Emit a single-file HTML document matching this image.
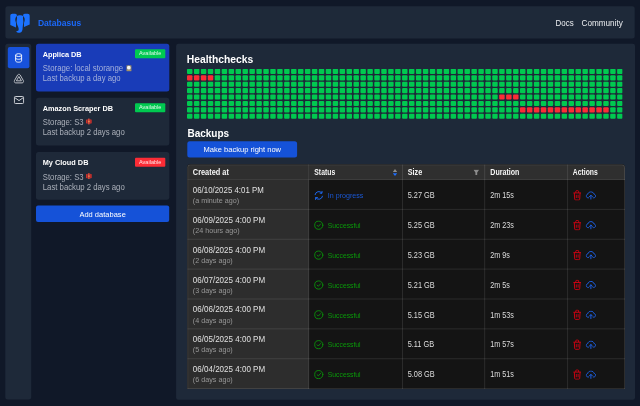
<!DOCTYPE html>
<html lang="en"><head><meta charset="utf-8"><title>Databasus</title>
<style>
html,body{margin:0;padding:0;}
body{width:640px;height:406px;overflow:hidden;background:#101828;font-family:"Liberation Sans", sans-serif;position:relative;will-change:transform;}
#app{position:absolute;left:0;top:0;width:6400px;height:4060px;transform:scale(0.1);transform-origin:0 0;}
#app *{position:absolute;margin:0;padding:0;box-sizing:border-box;}
#app .t{white-space:pre;line-height:120px;height:120px;font-weight:400;transform-origin:0 50%;}
#app button{border:0;font-family:inherit;display:block;}
#app a{text-decoration:none;}
</style></head><body><div id="app">
<header style="left:54px;top:63px;width:6293px;height:322px;background:#1e2939;border-radius:25px;">
 <svg viewBox="0 0 20 20.5" role="img" aria-label="logo" style="left:46px;top:67px;width:200px;height:205px;"><g fill="#1c72ff">
<path d="M2.4 0.8 H5.2 C6.2 0.8 7 1.6 6.9 2.6 C6.8 3.6 5.7 4.4 5.4 5.5 C5.2 6.4 5.2 7.4 5.5 8.2 C5.9 9.2 6 9.8 6 10.6 V14.5 L0.3 12 V3 C0.3 1.7 1.1 0.8 2.4 0.8 Z"/>
<path d="M17.6 0.8 H14.8 C13.8 0.8 13 1.6 13.1 2.6 C13.2 3.6 14.3 4.4 14.6 5.5 C14.8 6.4 14.8 7.4 14.5 8.2 C14.1 9.2 14 9.8 14 10.6 V14 L19.7 11.5 V3 C19.7 1.7 18.9 0.8 17.6 0.8 Z"/>
<path d="M7 3 C7.8 2.1 12.2 2.1 13 3 C13.1 3.9 12.9 4.8 13 5.8 C13.2 7 13.5 8.6 13.3 9.8 C13.1 11.4 12.8 12.6 12.7 14.2 C12.6 17.4 11.9 19.5 9.8 19.7 C8.1 19.8 6.6 19.3 6.1 18.4 C6.8 17.8 7.9 18.1 8.4 17.4 C9 16.5 8.6 15.1 8 13.6 C7.5 12.2 6.9 11.2 6.7 9.8 C6.5 8.6 6.8 7 7 5.8 C7.1 4.8 6.9 3.9 7 3 Z"/></g></svg>
 <h1 class="t" style="left:325px;top:105px;font-size:94px;color:#1b68f8;font-weight:700;transform:scaleX(0.913);">Databasus</h1>
 <nav style="left:5446px;top:77px;width:800px;height:200px;">
  <a class="t" style="left:56px;top:30px;font-size:88px;color:#eceef1;transform:scaleX(0.898);">Docs</a>
  <a class="t" style="left:316px;top:30px;font-size:88px;color:#eceef1;transform:scaleX(0.924);">Community</a>
 </nav>
</header>
<aside style="left:53px;top:438px;width:259px;height:3556px;background:#1e2939;border-radius:25px;">
 <button aria-label="Databases" style="left:25px;top:32px;width:216px;height:213px;background:#1752dc;border-radius:20px;">
  <svg viewBox="0 0 10 11" fill="none" stroke="#fff" stroke-width="0.9" style="left:58px;top:54px;width:100px;height:110px;"><ellipse cx="5" cy="2.7" rx="3" ry="1.4"/>
<path d="M2 2.7 V8.4 C2 9.2 3.3 9.8 5 9.8 C6.7 9.8 8 9.2 8 8.4 V2.7"/>
<path d="M2 5.5 C2 6.3 3.3 6.9 5 6.9 C6.7 6.9 8 6.3 8 5.5"/></svg>
 </button>
 <button aria-label="Storages" style="left:25px;top:245px;width:216px;height:213px;background:none;">
  <svg viewBox="0 0 11 10.4" fill="none" stroke="#d4d7dc" stroke-width="0.85" stroke-linejoin="round" style="left:56px;top:53px;width:110px;height:104px;"><path d="M4.3 1.3 C4.8 0.4 6.2 0.4 6.7 1.3 L10 7.1 C10.5 8 9.9 9.3 8.8 9.3 H2.2 C1.1 9.3 0.5 8 1 7.1 Z"/>
<path d="M5.5 2.9 L8 7.2 H3 Z"/></svg>
 </button>
 <button aria-label="Notifiers" style="left:25px;top:458px;width:216px;height:213px;background:none;">
  <svg viewBox="0 0 11 9" fill="none" stroke="#d4d7dc" stroke-width="0.95" stroke-linejoin="round" style="left:57px;top:60px;width:110px;height:90px;"><rect x="0.9" y="0.9" width="9.2" height="7" rx="1"/>
<path d="M1.2 2 L5.5 5 L9.8 2"/></svg>
 </button>
</aside>
<section style="left:360px;top:438px;width:1333px;height:1782px;">
 <article style="left:0px;top:0px;width:1333px;height:478px;background:#193cb8;border-radius:25px;">
  <h2 class="t" style="left:67px;top:46px;font-size:75px;color:#fff;font-weight:700;transform:scaleX(0.972);">Applica DB</h2>
  <span style="left:990px;top:54px;width:303px;height:90px;background:#00c950;border-radius:10px;">
   <span class="t" style="left:40px;top:-22px;font-size:56px;color:rgba(255,255,255,.88);transform:scaleX(0.990);">Available</span>
  </span>
  <p class="t" style="left:68px;top:183px;font-size:84px;color:#a5b1dc;transform:scaleX(0.930);">Storage: local storange</p>
  <svg viewBox="0 0 5.6 6.4" style="left:902px;top:213px;width:56px;height:64px;"><rect x="0.1" y="0.1" width="5.4" height="6.2" rx="0.6" fill="#8f8468"/>
<circle cx="2.6" cy="2.6" r="1.9" fill="#f4f4f4"/>
<rect x="0.6" y="5" width="4.4" height="0.9" fill="#a8956a"/></svg>
  <p class="t" style="left:68px;top:283px;font-size:84px;color:#a5b1dc;transform:scaleX(0.920);">Last backup a day ago</p>
 </article>
 <article style="left:0px;top:540px;width:1333px;height:478px;background:#1e2939;border-radius:25px;">
  <h2 class="t" style="left:67px;top:46px;font-size:75px;color:#fff;font-weight:700;transform:scaleX(0.974);">Amazon Scraper DB</h2>
  <span style="left:990px;top:54px;width:303px;height:90px;background:#00c950;border-radius:10px;">
   <span class="t" style="left:40px;top:-22px;font-size:56px;color:rgba(255,255,255,.88);transform:scaleX(0.990);">Available</span>
  </span>
  <p class="t" style="left:68px;top:183px;font-size:84px;color:#abb0ba;transform:scaleX(0.920);">Storage: S3</p>
  <svg viewBox="0 0 6 6.6" style="left:499px;top:204px;width:60px;height:66px;"><path d="M0.1 1.5 L1.8 1 V5.6 L0.1 5.1 Z M5.9 1.5 L4.2 1 V5.6 L5.9 5.1 Z" fill="#c9302c"/>
<path d="M2.2 0.6 L3 0.1 L3.8 0.6 V6 L3 6.5 L2.2 6 Z" fill="#e8473a"/>
<path d="M2.2 2.6 H3.8 V4 H2.2 Z" fill="#f08a4b"/></svg>
  <p class="t" style="left:68px;top:283px;font-size:84px;color:#abb0ba;transform:scaleX(0.923);">Last backup 2 days ago</p>
 </article>
 <article style="left:0px;top:1081px;width:1333px;height:478px;background:#1e2939;border-radius:25px;">
  <h2 class="t" style="left:67px;top:45px;font-size:75px;color:#fff;font-weight:700;transform:scaleX(0.981);">My Cloud DB</h2>
  <span style="left:990px;top:58px;width:303px;height:90px;background:#fb2c36;border-radius:10px;">
   <span class="t" style="left:40px;top:-17px;font-size:56px;color:rgba(255,255,255,.88);transform:scaleX(0.990);">Available</span>
  </span>
  <p class="t" style="left:68px;top:192px;font-size:84px;color:#abb0ba;transform:scaleX(0.920);">Storage: S3</p>
  <svg viewBox="0 0 6 6.6" style="left:499px;top:209px;width:60px;height:66px;"><path d="M0.1 1.5 L1.8 1 V5.6 L0.1 5.1 Z M5.9 1.5 L4.2 1 V5.6 L5.9 5.1 Z" fill="#c9302c"/>
<path d="M2.2 0.6 L3 0.1 L3.8 0.6 V6 L3 6.5 L2.2 6 Z" fill="#e8473a"/>
<path d="M2.2 2.6 H3.8 V4 H2.2 Z" fill="#f08a4b"/></svg>
  <p class="t" style="left:68px;top:292px;font-size:84px;color:#abb0ba;transform:scaleX(0.923);">Last backup 2 days ago</p>
 </article>
 <button style="left:0px;top:1618px;width:1332px;height:164px;background:#1552d8;border-radius:20px;">
  <span class="t" style="left:434px;top:27px;font-size:79px;color:#fff;transform:scaleX(0.952);">Add database</span>
 </button>
</section>
<main style="left:1761px;top:438px;width:4589px;height:3560px;background:#1e2939;border-radius:23px;">
 <h2 class="t" style="left:106px;top:95px;font-size:107px;color:#fff;font-weight:700;transform:scaleX(0.965);">Healthchecks</h2>
 <svg viewBox="0 0 435.6 50.0" role="img" aria-label="healthchecks" style="left:109px;top:251px;width:4356px;height:500px;"><g fill="#00c950"><rect x="0.00" y="0.00" width="5.45" height="5.1" rx="1"/><rect x="6.94" y="0.00" width="5.45" height="5.1" rx="1"/><rect x="13.88" y="0.00" width="5.45" height="5.1" rx="1"/><rect x="20.81" y="0.00" width="5.45" height="5.1" rx="1"/><rect x="27.75" y="0.00" width="5.45" height="5.1" rx="1"/><rect x="34.69" y="0.00" width="5.45" height="5.1" rx="1"/><rect x="41.63" y="0.00" width="5.45" height="5.1" rx="1"/><rect x="48.56" y="0.00" width="5.45" height="5.1" rx="1"/><rect x="55.50" y="0.00" width="5.45" height="5.1" rx="1"/><rect x="62.44" y="0.00" width="5.45" height="5.1" rx="1"/><rect x="69.38" y="0.00" width="5.45" height="5.1" rx="1"/><rect x="76.31" y="0.00" width="5.45" height="5.1" rx="1"/><rect x="83.25" y="0.00" width="5.45" height="5.1" rx="1"/><rect x="90.19" y="0.00" width="5.45" height="5.1" rx="1"/><rect x="97.13" y="0.00" width="5.45" height="5.1" rx="1"/><rect x="104.06" y="0.00" width="5.45" height="5.1" rx="1"/><rect x="111.00" y="0.00" width="5.45" height="5.1" rx="1"/><rect x="117.94" y="0.00" width="5.45" height="5.1" rx="1"/><rect x="124.88" y="0.00" width="5.45" height="5.1" rx="1"/><rect x="131.81" y="0.00" width="5.45" height="5.1" rx="1"/><rect x="138.75" y="0.00" width="5.45" height="5.1" rx="1"/><rect x="145.69" y="0.00" width="5.45" height="5.1" rx="1"/><rect x="152.63" y="0.00" width="5.45" height="5.1" rx="1"/><rect x="159.56" y="0.00" width="5.45" height="5.1" rx="1"/><rect x="166.50" y="0.00" width="5.45" height="5.1" rx="1"/><rect x="173.44" y="0.00" width="5.45" height="5.1" rx="1"/><rect x="180.38" y="0.00" width="5.45" height="5.1" rx="1"/><rect x="187.32" y="0.00" width="5.45" height="5.1" rx="1"/><rect x="194.25" y="0.00" width="5.45" height="5.1" rx="1"/><rect x="201.19" y="0.00" width="5.45" height="5.1" rx="1"/><rect x="208.13" y="0.00" width="5.45" height="5.1" rx="1"/><rect x="215.07" y="0.00" width="5.45" height="5.1" rx="1"/><rect x="222.00" y="0.00" width="5.45" height="5.1" rx="1"/><rect x="228.94" y="0.00" width="5.45" height="5.1" rx="1"/><rect x="235.88" y="0.00" width="5.45" height="5.1" rx="1"/><rect x="242.82" y="0.00" width="5.45" height="5.1" rx="1"/><rect x="249.75" y="0.00" width="5.45" height="5.1" rx="1"/><rect x="256.69" y="0.00" width="5.45" height="5.1" rx="1"/><rect x="263.63" y="0.00" width="5.45" height="5.1" rx="1"/><rect x="270.57" y="0.00" width="5.45" height="5.1" rx="1"/><rect x="277.50" y="0.00" width="5.45" height="5.1" rx="1"/><rect x="284.44" y="0.00" width="5.45" height="5.1" rx="1"/><rect x="291.38" y="0.00" width="5.45" height="5.1" rx="1"/><rect x="298.32" y="0.00" width="5.45" height="5.1" rx="1"/><rect x="305.25" y="0.00" width="5.45" height="5.1" rx="1"/><rect x="312.19" y="0.00" width="5.45" height="5.1" rx="1"/><rect x="319.13" y="0.00" width="5.45" height="5.1" rx="1"/><rect x="326.07" y="0.00" width="5.45" height="5.1" rx="1"/><rect x="333.00" y="0.00" width="5.45" height="5.1" rx="1"/><rect x="339.94" y="0.00" width="5.45" height="5.1" rx="1"/><rect x="346.88" y="0.00" width="5.45" height="5.1" rx="1"/><rect x="353.82" y="0.00" width="5.45" height="5.1" rx="1"/><rect x="360.76" y="0.00" width="5.45" height="5.1" rx="1"/><rect x="367.69" y="0.00" width="5.45" height="5.1" rx="1"/><rect x="374.63" y="0.00" width="5.45" height="5.1" rx="1"/><rect x="381.57" y="0.00" width="5.45" height="5.1" rx="1"/><rect x="388.51" y="0.00" width="5.45" height="5.1" rx="1"/><rect x="395.44" y="0.00" width="5.45" height="5.1" rx="1"/><rect x="402.38" y="0.00" width="5.45" height="5.1" rx="1"/><rect x="409.32" y="0.00" width="5.45" height="5.1" rx="1"/><rect x="416.26" y="0.00" width="5.45" height="5.1" rx="1"/><rect x="423.19" y="0.00" width="5.45" height="5.1" rx="1"/><rect x="430.13" y="0.00" width="5.45" height="5.1" rx="1"/><rect x="27.75" y="6.40" width="5.45" height="5.1" rx="1"/><rect x="34.69" y="6.40" width="5.45" height="5.1" rx="1"/><rect x="41.63" y="6.40" width="5.45" height="5.1" rx="1"/><rect x="48.56" y="6.40" width="5.45" height="5.1" rx="1"/><rect x="55.50" y="6.40" width="5.45" height="5.1" rx="1"/><rect x="62.44" y="6.40" width="5.45" height="5.1" rx="1"/><rect x="69.38" y="6.40" width="5.45" height="5.1" rx="1"/><rect x="76.31" y="6.40" width="5.45" height="5.1" rx="1"/><rect x="83.25" y="6.40" width="5.45" height="5.1" rx="1"/><rect x="90.19" y="6.40" width="5.45" height="5.1" rx="1"/><rect x="97.13" y="6.40" width="5.45" height="5.1" rx="1"/><rect x="104.06" y="6.40" width="5.45" height="5.1" rx="1"/><rect x="111.00" y="6.40" width="5.45" height="5.1" rx="1"/><rect x="117.94" y="6.40" width="5.45" height="5.1" rx="1"/><rect x="124.88" y="6.40" width="5.45" height="5.1" rx="1"/><rect x="131.81" y="6.40" width="5.45" height="5.1" rx="1"/><rect x="138.75" y="6.40" width="5.45" height="5.1" rx="1"/><rect x="145.69" y="6.40" width="5.45" height="5.1" rx="1"/><rect x="152.63" y="6.40" width="5.45" height="5.1" rx="1"/><rect x="159.56" y="6.40" width="5.45" height="5.1" rx="1"/><rect x="166.50" y="6.40" width="5.45" height="5.1" rx="1"/><rect x="173.44" y="6.40" width="5.45" height="5.1" rx="1"/><rect x="180.38" y="6.40" width="5.45" height="5.1" rx="1"/><rect x="187.32" y="6.40" width="5.45" height="5.1" rx="1"/><rect x="194.25" y="6.40" width="5.45" height="5.1" rx="1"/><rect x="201.19" y="6.40" width="5.45" height="5.1" rx="1"/><rect x="208.13" y="6.40" width="5.45" height="5.1" rx="1"/><rect x="215.07" y="6.40" width="5.45" height="5.1" rx="1"/><rect x="222.00" y="6.40" width="5.45" height="5.1" rx="1"/><rect x="228.94" y="6.40" width="5.45" height="5.1" rx="1"/><rect x="235.88" y="6.40" width="5.45" height="5.1" rx="1"/><rect x="242.82" y="6.40" width="5.45" height="5.1" rx="1"/><rect x="249.75" y="6.40" width="5.45" height="5.1" rx="1"/><rect x="256.69" y="6.40" width="5.45" height="5.1" rx="1"/><rect x="263.63" y="6.40" width="5.45" height="5.1" rx="1"/><rect x="270.57" y="6.40" width="5.45" height="5.1" rx="1"/><rect x="277.50" y="6.40" width="5.45" height="5.1" rx="1"/><rect x="284.44" y="6.40" width="5.45" height="5.1" rx="1"/><rect x="291.38" y="6.40" width="5.45" height="5.1" rx="1"/><rect x="298.32" y="6.40" width="5.45" height="5.1" rx="1"/><rect x="305.25" y="6.40" width="5.45" height="5.1" rx="1"/><rect x="312.19" y="6.40" width="5.45" height="5.1" rx="1"/><rect x="319.13" y="6.40" width="5.45" height="5.1" rx="1"/><rect x="326.07" y="6.40" width="5.45" height="5.1" rx="1"/><rect x="333.00" y="6.40" width="5.45" height="5.1" rx="1"/><rect x="339.94" y="6.40" width="5.45" height="5.1" rx="1"/><rect x="346.88" y="6.40" width="5.45" height="5.1" rx="1"/><rect x="353.82" y="6.40" width="5.45" height="5.1" rx="1"/><rect x="360.76" y="6.40" width="5.45" height="5.1" rx="1"/><rect x="367.69" y="6.40" width="5.45" height="5.1" rx="1"/><rect x="374.63" y="6.40" width="5.45" height="5.1" rx="1"/><rect x="381.57" y="6.40" width="5.45" height="5.1" rx="1"/><rect x="388.51" y="6.40" width="5.45" height="5.1" rx="1"/><rect x="395.44" y="6.40" width="5.45" height="5.1" rx="1"/><rect x="402.38" y="6.40" width="5.45" height="5.1" rx="1"/><rect x="409.32" y="6.40" width="5.45" height="5.1" rx="1"/><rect x="416.26" y="6.40" width="5.45" height="5.1" rx="1"/><rect x="423.19" y="6.40" width="5.45" height="5.1" rx="1"/><rect x="430.13" y="6.40" width="5.45" height="5.1" rx="1"/><rect x="0.00" y="12.80" width="5.45" height="5.1" rx="1"/><rect x="6.94" y="12.80" width="5.45" height="5.1" rx="1"/><rect x="13.88" y="12.80" width="5.45" height="5.1" rx="1"/><rect x="20.81" y="12.80" width="5.45" height="5.1" rx="1"/><rect x="27.75" y="12.80" width="5.45" height="5.1" rx="1"/><rect x="34.69" y="12.80" width="5.45" height="5.1" rx="1"/><rect x="41.63" y="12.80" width="5.45" height="5.1" rx="1"/><rect x="48.56" y="12.80" width="5.45" height="5.1" rx="1"/><rect x="55.50" y="12.80" width="5.45" height="5.1" rx="1"/><rect x="62.44" y="12.80" width="5.45" height="5.1" rx="1"/><rect x="69.38" y="12.80" width="5.45" height="5.1" rx="1"/><rect x="76.31" y="12.80" width="5.45" height="5.1" rx="1"/><rect x="83.25" y="12.80" width="5.45" height="5.1" rx="1"/><rect x="90.19" y="12.80" width="5.45" height="5.1" rx="1"/><rect x="97.13" y="12.80" width="5.45" height="5.1" rx="1"/><rect x="104.06" y="12.80" width="5.45" height="5.1" rx="1"/><rect x="111.00" y="12.80" width="5.45" height="5.1" rx="1"/><rect x="117.94" y="12.80" width="5.45" height="5.1" rx="1"/><rect x="124.88" y="12.80" width="5.45" height="5.1" rx="1"/><rect x="131.81" y="12.80" width="5.45" height="5.1" rx="1"/><rect x="138.75" y="12.80" width="5.45" height="5.1" rx="1"/><rect x="145.69" y="12.80" width="5.45" height="5.1" rx="1"/><rect x="152.63" y="12.80" width="5.45" height="5.1" rx="1"/><rect x="159.56" y="12.80" width="5.45" height="5.1" rx="1"/><rect x="166.50" y="12.80" width="5.45" height="5.1" rx="1"/><rect x="173.44" y="12.80" width="5.45" height="5.1" rx="1"/><rect x="180.38" y="12.80" width="5.45" height="5.1" rx="1"/><rect x="187.32" y="12.80" width="5.45" height="5.1" rx="1"/><rect x="194.25" y="12.80" width="5.45" height="5.1" rx="1"/><rect x="201.19" y="12.80" width="5.45" height="5.1" rx="1"/><rect x="208.13" y="12.80" width="5.45" height="5.1" rx="1"/><rect x="215.07" y="12.80" width="5.45" height="5.1" rx="1"/><rect x="222.00" y="12.80" width="5.45" height="5.1" rx="1"/><rect x="228.94" y="12.80" width="5.45" height="5.1" rx="1"/><rect x="235.88" y="12.80" width="5.45" height="5.1" rx="1"/><rect x="242.82" y="12.80" width="5.45" height="5.1" rx="1"/><rect x="249.75" y="12.80" width="5.45" height="5.1" rx="1"/><rect x="256.69" y="12.80" width="5.45" height="5.1" rx="1"/><rect x="263.63" y="12.80" width="5.45" height="5.1" rx="1"/><rect x="270.57" y="12.80" width="5.45" height="5.1" rx="1"/><rect x="277.50" y="12.80" width="5.45" height="5.1" rx="1"/><rect x="284.44" y="12.80" width="5.45" height="5.1" rx="1"/><rect x="291.38" y="12.80" width="5.45" height="5.1" rx="1"/><rect x="298.32" y="12.80" width="5.45" height="5.1" rx="1"/><rect x="305.25" y="12.80" width="5.45" height="5.1" rx="1"/><rect x="312.19" y="12.80" width="5.45" height="5.1" rx="1"/><rect x="319.13" y="12.80" width="5.45" height="5.1" rx="1"/><rect x="326.07" y="12.80" width="5.45" height="5.1" rx="1"/><rect x="333.00" y="12.80" width="5.45" height="5.1" rx="1"/><rect x="339.94" y="12.80" width="5.45" height="5.1" rx="1"/><rect x="346.88" y="12.80" width="5.45" height="5.1" rx="1"/><rect x="353.82" y="12.80" width="5.45" height="5.1" rx="1"/><rect x="360.76" y="12.80" width="5.45" height="5.1" rx="1"/><rect x="367.69" y="12.80" width="5.45" height="5.1" rx="1"/><rect x="374.63" y="12.80" width="5.45" height="5.1" rx="1"/><rect x="381.57" y="12.80" width="5.45" height="5.1" rx="1"/><rect x="388.51" y="12.80" width="5.45" height="5.1" rx="1"/><rect x="395.44" y="12.80" width="5.45" height="5.1" rx="1"/><rect x="402.38" y="12.80" width="5.45" height="5.1" rx="1"/><rect x="409.32" y="12.80" width="5.45" height="5.1" rx="1"/><rect x="416.26" y="12.80" width="5.45" height="5.1" rx="1"/><rect x="423.19" y="12.80" width="5.45" height="5.1" rx="1"/><rect x="430.13" y="12.80" width="5.45" height="5.1" rx="1"/><rect x="0.00" y="19.20" width="5.45" height="5.1" rx="1"/><rect x="6.94" y="19.20" width="5.45" height="5.1" rx="1"/><rect x="13.88" y="19.20" width="5.45" height="5.1" rx="1"/><rect x="20.81" y="19.20" width="5.45" height="5.1" rx="1"/><rect x="27.75" y="19.20" width="5.45" height="5.1" rx="1"/><rect x="34.69" y="19.20" width="5.45" height="5.1" rx="1"/><rect x="41.63" y="19.20" width="5.45" height="5.1" rx="1"/><rect x="48.56" y="19.20" width="5.45" height="5.1" rx="1"/><rect x="55.50" y="19.20" width="5.45" height="5.1" rx="1"/><rect x="62.44" y="19.20" width="5.45" height="5.1" rx="1"/><rect x="69.38" y="19.20" width="5.45" height="5.1" rx="1"/><rect x="76.31" y="19.20" width="5.45" height="5.1" rx="1"/><rect x="83.25" y="19.20" width="5.45" height="5.1" rx="1"/><rect x="90.19" y="19.20" width="5.45" height="5.1" rx="1"/><rect x="97.13" y="19.20" width="5.45" height="5.1" rx="1"/><rect x="104.06" y="19.20" width="5.45" height="5.1" rx="1"/><rect x="111.00" y="19.20" width="5.45" height="5.1" rx="1"/><rect x="117.94" y="19.20" width="5.45" height="5.1" rx="1"/><rect x="124.88" y="19.20" width="5.45" height="5.1" rx="1"/><rect x="131.81" y="19.20" width="5.45" height="5.1" rx="1"/><rect x="138.75" y="19.20" width="5.45" height="5.1" rx="1"/><rect x="145.69" y="19.20" width="5.45" height="5.1" rx="1"/><rect x="152.63" y="19.20" width="5.45" height="5.1" rx="1"/><rect x="159.56" y="19.20" width="5.45" height="5.1" rx="1"/><rect x="166.50" y="19.20" width="5.45" height="5.1" rx="1"/><rect x="173.44" y="19.20" width="5.45" height="5.1" rx="1"/><rect x="180.38" y="19.20" width="5.45" height="5.1" rx="1"/><rect x="187.32" y="19.20" width="5.45" height="5.1" rx="1"/><rect x="194.25" y="19.20" width="5.45" height="5.1" rx="1"/><rect x="201.19" y="19.20" width="5.45" height="5.1" rx="1"/><rect x="208.13" y="19.20" width="5.45" height="5.1" rx="1"/><rect x="215.07" y="19.20" width="5.45" height="5.1" rx="1"/><rect x="222.00" y="19.20" width="5.45" height="5.1" rx="1"/><rect x="228.94" y="19.20" width="5.45" height="5.1" rx="1"/><rect x="235.88" y="19.20" width="5.45" height="5.1" rx="1"/><rect x="242.82" y="19.20" width="5.45" height="5.1" rx="1"/><rect x="249.75" y="19.20" width="5.45" height="5.1" rx="1"/><rect x="256.69" y="19.20" width="5.45" height="5.1" rx="1"/><rect x="263.63" y="19.20" width="5.45" height="5.1" rx="1"/><rect x="270.57" y="19.20" width="5.45" height="5.1" rx="1"/><rect x="277.50" y="19.20" width="5.45" height="5.1" rx="1"/><rect x="284.44" y="19.20" width="5.45" height="5.1" rx="1"/><rect x="291.38" y="19.20" width="5.45" height="5.1" rx="1"/><rect x="298.32" y="19.20" width="5.45" height="5.1" rx="1"/><rect x="305.25" y="19.20" width="5.45" height="5.1" rx="1"/><rect x="312.19" y="19.20" width="5.45" height="5.1" rx="1"/><rect x="319.13" y="19.20" width="5.45" height="5.1" rx="1"/><rect x="326.07" y="19.20" width="5.45" height="5.1" rx="1"/><rect x="333.00" y="19.20" width="5.45" height="5.1" rx="1"/><rect x="339.94" y="19.20" width="5.45" height="5.1" rx="1"/><rect x="346.88" y="19.20" width="5.45" height="5.1" rx="1"/><rect x="353.82" y="19.20" width="5.45" height="5.1" rx="1"/><rect x="360.76" y="19.20" width="5.45" height="5.1" rx="1"/><rect x="367.69" y="19.20" width="5.45" height="5.1" rx="1"/><rect x="374.63" y="19.20" width="5.45" height="5.1" rx="1"/><rect x="381.57" y="19.20" width="5.45" height="5.1" rx="1"/><rect x="388.51" y="19.20" width="5.45" height="5.1" rx="1"/><rect x="395.44" y="19.20" width="5.45" height="5.1" rx="1"/><rect x="402.38" y="19.20" width="5.45" height="5.1" rx="1"/><rect x="409.32" y="19.20" width="5.45" height="5.1" rx="1"/><rect x="416.26" y="19.20" width="5.45" height="5.1" rx="1"/><rect x="423.19" y="19.20" width="5.45" height="5.1" rx="1"/><rect x="430.13" y="19.20" width="5.45" height="5.1" rx="1"/><rect x="0.00" y="25.60" width="5.45" height="5.1" rx="1"/><rect x="6.94" y="25.60" width="5.45" height="5.1" rx="1"/><rect x="13.88" y="25.60" width="5.45" height="5.1" rx="1"/><rect x="20.81" y="25.60" width="5.45" height="5.1" rx="1"/><rect x="27.75" y="25.60" width="5.45" height="5.1" rx="1"/><rect x="34.69" y="25.60" width="5.45" height="5.1" rx="1"/><rect x="41.63" y="25.60" width="5.45" height="5.1" rx="1"/><rect x="48.56" y="25.60" width="5.45" height="5.1" rx="1"/><rect x="55.50" y="25.60" width="5.45" height="5.1" rx="1"/><rect x="62.44" y="25.60" width="5.45" height="5.1" rx="1"/><rect x="69.38" y="25.60" width="5.45" height="5.1" rx="1"/><rect x="76.31" y="25.60" width="5.45" height="5.1" rx="1"/><rect x="83.25" y="25.60" width="5.45" height="5.1" rx="1"/><rect x="90.19" y="25.60" width="5.45" height="5.1" rx="1"/><rect x="97.13" y="25.60" width="5.45" height="5.1" rx="1"/><rect x="104.06" y="25.60" width="5.45" height="5.1" rx="1"/><rect x="111.00" y="25.60" width="5.45" height="5.1" rx="1"/><rect x="117.94" y="25.60" width="5.45" height="5.1" rx="1"/><rect x="124.88" y="25.60" width="5.45" height="5.1" rx="1"/><rect x="131.81" y="25.60" width="5.45" height="5.1" rx="1"/><rect x="138.75" y="25.60" width="5.45" height="5.1" rx="1"/><rect x="145.69" y="25.60" width="5.45" height="5.1" rx="1"/><rect x="152.63" y="25.60" width="5.45" height="5.1" rx="1"/><rect x="159.56" y="25.60" width="5.45" height="5.1" rx="1"/><rect x="166.50" y="25.60" width="5.45" height="5.1" rx="1"/><rect x="173.44" y="25.60" width="5.45" height="5.1" rx="1"/><rect x="180.38" y="25.60" width="5.45" height="5.1" rx="1"/><rect x="187.32" y="25.60" width="5.45" height="5.1" rx="1"/><rect x="194.25" y="25.60" width="5.45" height="5.1" rx="1"/><rect x="201.19" y="25.60" width="5.45" height="5.1" rx="1"/><rect x="208.13" y="25.60" width="5.45" height="5.1" rx="1"/><rect x="215.07" y="25.60" width="5.45" height="5.1" rx="1"/><rect x="222.00" y="25.60" width="5.45" height="5.1" rx="1"/><rect x="228.94" y="25.60" width="5.45" height="5.1" rx="1"/><rect x="235.88" y="25.60" width="5.45" height="5.1" rx="1"/><rect x="242.82" y="25.60" width="5.45" height="5.1" rx="1"/><rect x="249.75" y="25.60" width="5.45" height="5.1" rx="1"/><rect x="256.69" y="25.60" width="5.45" height="5.1" rx="1"/><rect x="263.63" y="25.60" width="5.45" height="5.1" rx="1"/><rect x="270.57" y="25.60" width="5.45" height="5.1" rx="1"/><rect x="277.50" y="25.60" width="5.45" height="5.1" rx="1"/><rect x="284.44" y="25.60" width="5.45" height="5.1" rx="1"/><rect x="291.38" y="25.60" width="5.45" height="5.1" rx="1"/><rect x="298.32" y="25.60" width="5.45" height="5.1" rx="1"/><rect x="305.25" y="25.60" width="5.45" height="5.1" rx="1"/><rect x="333.00" y="25.60" width="5.45" height="5.1" rx="1"/><rect x="339.94" y="25.60" width="5.45" height="5.1" rx="1"/><rect x="346.88" y="25.60" width="5.45" height="5.1" rx="1"/><rect x="353.82" y="25.60" width="5.45" height="5.1" rx="1"/><rect x="360.76" y="25.60" width="5.45" height="5.1" rx="1"/><rect x="367.69" y="25.60" width="5.45" height="5.1" rx="1"/><rect x="374.63" y="25.60" width="5.45" height="5.1" rx="1"/><rect x="381.57" y="25.60" width="5.45" height="5.1" rx="1"/><rect x="388.51" y="25.60" width="5.45" height="5.1" rx="1"/><rect x="395.44" y="25.60" width="5.45" height="5.1" rx="1"/><rect x="402.38" y="25.60" width="5.45" height="5.1" rx="1"/><rect x="409.32" y="25.60" width="5.45" height="5.1" rx="1"/><rect x="416.26" y="25.60" width="5.45" height="5.1" rx="1"/><rect x="423.19" y="25.60" width="5.45" height="5.1" rx="1"/><rect x="430.13" y="25.60" width="5.45" height="5.1" rx="1"/><rect x="0.00" y="32.00" width="5.45" height="5.1" rx="1"/><rect x="6.94" y="32.00" width="5.45" height="5.1" rx="1"/><rect x="13.88" y="32.00" width="5.45" height="5.1" rx="1"/><rect x="20.81" y="32.00" width="5.45" height="5.1" rx="1"/><rect x="27.75" y="32.00" width="5.45" height="5.1" rx="1"/><rect x="34.69" y="32.00" width="5.45" height="5.1" rx="1"/><rect x="41.63" y="32.00" width="5.45" height="5.1" rx="1"/><rect x="48.56" y="32.00" width="5.45" height="5.1" rx="1"/><rect x="55.50" y="32.00" width="5.45" height="5.1" rx="1"/><rect x="62.44" y="32.00" width="5.45" height="5.1" rx="1"/><rect x="69.38" y="32.00" width="5.45" height="5.1" rx="1"/><rect x="76.31" y="32.00" width="5.45" height="5.1" rx="1"/><rect x="83.25" y="32.00" width="5.45" height="5.1" rx="1"/><rect x="90.19" y="32.00" width="5.45" height="5.1" rx="1"/><rect x="97.13" y="32.00" width="5.45" height="5.1" rx="1"/><rect x="104.06" y="32.00" width="5.45" height="5.1" rx="1"/><rect x="111.00" y="32.00" width="5.45" height="5.1" rx="1"/><rect x="117.94" y="32.00" width="5.45" height="5.1" rx="1"/><rect x="124.88" y="32.00" width="5.45" height="5.1" rx="1"/><rect x="131.81" y="32.00" width="5.45" height="5.1" rx="1"/><rect x="138.75" y="32.00" width="5.45" height="5.1" rx="1"/><rect x="145.69" y="32.00" width="5.45" height="5.1" rx="1"/><rect x="152.63" y="32.00" width="5.45" height="5.1" rx="1"/><rect x="159.56" y="32.00" width="5.45" height="5.1" rx="1"/><rect x="166.50" y="32.00" width="5.45" height="5.1" rx="1"/><rect x="173.44" y="32.00" width="5.45" height="5.1" rx="1"/><rect x="180.38" y="32.00" width="5.45" height="5.1" rx="1"/><rect x="187.32" y="32.00" width="5.45" height="5.1" rx="1"/><rect x="194.25" y="32.00" width="5.45" height="5.1" rx="1"/><rect x="201.19" y="32.00" width="5.45" height="5.1" rx="1"/><rect x="208.13" y="32.00" width="5.45" height="5.1" rx="1"/><rect x="215.07" y="32.00" width="5.45" height="5.1" rx="1"/><rect x="222.00" y="32.00" width="5.45" height="5.1" rx="1"/><rect x="228.94" y="32.00" width="5.45" height="5.1" rx="1"/><rect x="235.88" y="32.00" width="5.45" height="5.1" rx="1"/><rect x="242.82" y="32.00" width="5.45" height="5.1" rx="1"/><rect x="249.75" y="32.00" width="5.45" height="5.1" rx="1"/><rect x="256.69" y="32.00" width="5.45" height="5.1" rx="1"/><rect x="263.63" y="32.00" width="5.45" height="5.1" rx="1"/><rect x="270.57" y="32.00" width="5.45" height="5.1" rx="1"/><rect x="277.50" y="32.00" width="5.45" height="5.1" rx="1"/><rect x="284.44" y="32.00" width="5.45" height="5.1" rx="1"/><rect x="291.38" y="32.00" width="5.45" height="5.1" rx="1"/><rect x="298.32" y="32.00" width="5.45" height="5.1" rx="1"/><rect x="305.25" y="32.00" width="5.45" height="5.1" rx="1"/><rect x="312.19" y="32.00" width="5.45" height="5.1" rx="1"/><rect x="319.13" y="32.00" width="5.45" height="5.1" rx="1"/><rect x="326.07" y="32.00" width="5.45" height="5.1" rx="1"/><rect x="333.00" y="32.00" width="5.45" height="5.1" rx="1"/><rect x="339.94" y="32.00" width="5.45" height="5.1" rx="1"/><rect x="346.88" y="32.00" width="5.45" height="5.1" rx="1"/><rect x="353.82" y="32.00" width="5.45" height="5.1" rx="1"/><rect x="360.76" y="32.00" width="5.45" height="5.1" rx="1"/><rect x="367.69" y="32.00" width="5.45" height="5.1" rx="1"/><rect x="374.63" y="32.00" width="5.45" height="5.1" rx="1"/><rect x="381.57" y="32.00" width="5.45" height="5.1" rx="1"/><rect x="388.51" y="32.00" width="5.45" height="5.1" rx="1"/><rect x="395.44" y="32.00" width="5.45" height="5.1" rx="1"/><rect x="402.38" y="32.00" width="5.45" height="5.1" rx="1"/><rect x="409.32" y="32.00" width="5.45" height="5.1" rx="1"/><rect x="416.26" y="32.00" width="5.45" height="5.1" rx="1"/><rect x="423.19" y="32.00" width="5.45" height="5.1" rx="1"/><rect x="430.13" y="32.00" width="5.45" height="5.1" rx="1"/><rect x="0.00" y="38.40" width="5.45" height="5.1" rx="1"/><rect x="6.94" y="38.40" width="5.45" height="5.1" rx="1"/><rect x="13.88" y="38.40" width="5.45" height="5.1" rx="1"/><rect x="20.81" y="38.40" width="5.45" height="5.1" rx="1"/><rect x="27.75" y="38.40" width="5.45" height="5.1" rx="1"/><rect x="34.69" y="38.40" width="5.45" height="5.1" rx="1"/><rect x="41.63" y="38.40" width="5.45" height="5.1" rx="1"/><rect x="48.56" y="38.40" width="5.45" height="5.1" rx="1"/><rect x="55.50" y="38.40" width="5.45" height="5.1" rx="1"/><rect x="62.44" y="38.40" width="5.45" height="5.1" rx="1"/><rect x="69.38" y="38.40" width="5.45" height="5.1" rx="1"/><rect x="76.31" y="38.40" width="5.45" height="5.1" rx="1"/><rect x="83.25" y="38.40" width="5.45" height="5.1" rx="1"/><rect x="90.19" y="38.40" width="5.45" height="5.1" rx="1"/><rect x="97.13" y="38.40" width="5.45" height="5.1" rx="1"/><rect x="104.06" y="38.40" width="5.45" height="5.1" rx="1"/><rect x="111.00" y="38.40" width="5.45" height="5.1" rx="1"/><rect x="117.94" y="38.40" width="5.45" height="5.1" rx="1"/><rect x="124.88" y="38.40" width="5.45" height="5.1" rx="1"/><rect x="131.81" y="38.40" width="5.45" height="5.1" rx="1"/><rect x="138.75" y="38.40" width="5.45" height="5.1" rx="1"/><rect x="145.69" y="38.40" width="5.45" height="5.1" rx="1"/><rect x="152.63" y="38.40" width="5.45" height="5.1" rx="1"/><rect x="159.56" y="38.40" width="5.45" height="5.1" rx="1"/><rect x="166.50" y="38.40" width="5.45" height="5.1" rx="1"/><rect x="173.44" y="38.40" width="5.45" height="5.1" rx="1"/><rect x="180.38" y="38.40" width="5.45" height="5.1" rx="1"/><rect x="187.32" y="38.40" width="5.45" height="5.1" rx="1"/><rect x="194.25" y="38.40" width="5.45" height="5.1" rx="1"/><rect x="201.19" y="38.40" width="5.45" height="5.1" rx="1"/><rect x="208.13" y="38.40" width="5.45" height="5.1" rx="1"/><rect x="215.07" y="38.40" width="5.45" height="5.1" rx="1"/><rect x="222.00" y="38.40" width="5.45" height="5.1" rx="1"/><rect x="228.94" y="38.40" width="5.45" height="5.1" rx="1"/><rect x="235.88" y="38.40" width="5.45" height="5.1" rx="1"/><rect x="242.82" y="38.40" width="5.45" height="5.1" rx="1"/><rect x="249.75" y="38.40" width="5.45" height="5.1" rx="1"/><rect x="256.69" y="38.40" width="5.45" height="5.1" rx="1"/><rect x="263.63" y="38.40" width="5.45" height="5.1" rx="1"/><rect x="270.57" y="38.40" width="5.45" height="5.1" rx="1"/><rect x="277.50" y="38.40" width="5.45" height="5.1" rx="1"/><rect x="284.44" y="38.40" width="5.45" height="5.1" rx="1"/><rect x="291.38" y="38.40" width="5.45" height="5.1" rx="1"/><rect x="298.32" y="38.40" width="5.45" height="5.1" rx="1"/><rect x="305.25" y="38.40" width="5.45" height="5.1" rx="1"/><rect x="312.19" y="38.40" width="5.45" height="5.1" rx="1"/><rect x="319.13" y="38.40" width="5.45" height="5.1" rx="1"/><rect x="326.07" y="38.40" width="5.45" height="5.1" rx="1"/><rect x="423.19" y="38.40" width="5.45" height="5.1" rx="1"/><rect x="430.13" y="38.40" width="5.45" height="5.1" rx="1"/><rect x="0.00" y="44.80" width="5.45" height="5.1" rx="1"/><rect x="6.94" y="44.80" width="5.45" height="5.1" rx="1"/><rect x="13.88" y="44.80" width="5.45" height="5.1" rx="1"/><rect x="20.81" y="44.80" width="5.45" height="5.1" rx="1"/><rect x="27.75" y="44.80" width="5.45" height="5.1" rx="1"/><rect x="34.69" y="44.80" width="5.45" height="5.1" rx="1"/><rect x="41.63" y="44.80" width="5.45" height="5.1" rx="1"/><rect x="48.56" y="44.80" width="5.45" height="5.1" rx="1"/><rect x="55.50" y="44.80" width="5.45" height="5.1" rx="1"/><rect x="62.44" y="44.80" width="5.45" height="5.1" rx="1"/><rect x="69.38" y="44.80" width="5.45" height="5.1" rx="1"/><rect x="76.31" y="44.80" width="5.45" height="5.1" rx="1"/><rect x="83.25" y="44.80" width="5.45" height="5.1" rx="1"/><rect x="90.19" y="44.80" width="5.45" height="5.1" rx="1"/><rect x="97.13" y="44.80" width="5.45" height="5.1" rx="1"/><rect x="104.06" y="44.80" width="5.45" height="5.1" rx="1"/><rect x="111.00" y="44.80" width="5.45" height="5.1" rx="1"/><rect x="117.94" y="44.80" width="5.45" height="5.1" rx="1"/><rect x="124.88" y="44.80" width="5.45" height="5.1" rx="1"/><rect x="131.81" y="44.80" width="5.45" height="5.1" rx="1"/><rect x="138.75" y="44.80" width="5.45" height="5.1" rx="1"/><rect x="145.69" y="44.80" width="5.45" height="5.1" rx="1"/><rect x="152.63" y="44.80" width="5.45" height="5.1" rx="1"/><rect x="159.56" y="44.80" width="5.45" height="5.1" rx="1"/><rect x="166.50" y="44.80" width="5.45" height="5.1" rx="1"/><rect x="173.44" y="44.80" width="5.45" height="5.1" rx="1"/><rect x="180.38" y="44.80" width="5.45" height="5.1" rx="1"/><rect x="187.32" y="44.80" width="5.45" height="5.1" rx="1"/><rect x="194.25" y="44.80" width="5.45" height="5.1" rx="1"/><rect x="201.19" y="44.80" width="5.45" height="5.1" rx="1"/><rect x="208.13" y="44.80" width="5.45" height="5.1" rx="1"/><rect x="215.07" y="44.80" width="5.45" height="5.1" rx="1"/><rect x="222.00" y="44.80" width="5.45" height="5.1" rx="1"/><rect x="228.94" y="44.80" width="5.45" height="5.1" rx="1"/><rect x="235.88" y="44.80" width="5.45" height="5.1" rx="1"/><rect x="242.82" y="44.80" width="5.45" height="5.1" rx="1"/><rect x="249.75" y="44.80" width="5.45" height="5.1" rx="1"/><rect x="256.69" y="44.80" width="5.45" height="5.1" rx="1"/><rect x="263.63" y="44.80" width="5.45" height="5.1" rx="1"/><rect x="270.57" y="44.80" width="5.45" height="5.1" rx="1"/><rect x="277.50" y="44.80" width="5.45" height="5.1" rx="1"/><rect x="284.44" y="44.80" width="5.45" height="5.1" rx="1"/><rect x="291.38" y="44.80" width="5.45" height="5.1" rx="1"/><rect x="298.32" y="44.80" width="5.45" height="5.1" rx="1"/><rect x="305.25" y="44.80" width="5.45" height="5.1" rx="1"/><rect x="312.19" y="44.80" width="5.45" height="5.1" rx="1"/><rect x="319.13" y="44.80" width="5.45" height="5.1" rx="1"/><rect x="326.07" y="44.80" width="5.45" height="5.1" rx="1"/><rect x="333.00" y="44.80" width="5.45" height="5.1" rx="1"/><rect x="339.94" y="44.80" width="5.45" height="5.1" rx="1"/><rect x="346.88" y="44.80" width="5.45" height="5.1" rx="1"/><rect x="353.82" y="44.80" width="5.45" height="5.1" rx="1"/><rect x="360.76" y="44.80" width="5.45" height="5.1" rx="1"/><rect x="367.69" y="44.80" width="5.45" height="5.1" rx="1"/><rect x="374.63" y="44.80" width="5.45" height="5.1" rx="1"/><rect x="381.57" y="44.80" width="5.45" height="5.1" rx="1"/><rect x="388.51" y="44.80" width="5.45" height="5.1" rx="1"/><rect x="395.44" y="44.80" width="5.45" height="5.1" rx="1"/><rect x="402.38" y="44.80" width="5.45" height="5.1" rx="1"/><rect x="409.32" y="44.80" width="5.45" height="5.1" rx="1"/><rect x="416.26" y="44.80" width="5.45" height="5.1" rx="1"/><rect x="423.19" y="44.80" width="5.45" height="5.1" rx="1"/><rect x="430.13" y="44.80" width="5.45" height="5.1" rx="1"/></g>
<g fill="#fb2c36"><rect x="0.00" y="6.40" width="5.45" height="5.1" rx="1"/><rect x="6.94" y="6.40" width="5.45" height="5.1" rx="1"/><rect x="13.88" y="6.40" width="5.45" height="5.1" rx="1"/><rect x="20.81" y="6.40" width="5.45" height="5.1" rx="1"/><rect x="312.19" y="25.60" width="5.45" height="5.1" rx="1"/><rect x="319.13" y="25.60" width="5.45" height="5.1" rx="1"/><rect x="326.07" y="25.60" width="5.45" height="5.1" rx="1"/><rect x="333.00" y="38.40" width="5.45" height="5.1" rx="1"/><rect x="339.94" y="38.40" width="5.45" height="5.1" rx="1"/><rect x="346.88" y="38.40" width="5.45" height="5.1" rx="1"/><rect x="353.82" y="38.40" width="5.45" height="5.1" rx="1"/><rect x="360.76" y="38.40" width="5.45" height="5.1" rx="1"/><rect x="367.69" y="38.40" width="5.45" height="5.1" rx="1"/><rect x="374.63" y="38.40" width="5.45" height="5.1" rx="1"/><rect x="381.57" y="38.40" width="5.45" height="5.1" rx="1"/><rect x="388.51" y="38.40" width="5.45" height="5.1" rx="1"/><rect x="395.44" y="38.40" width="5.45" height="5.1" rx="1"/><rect x="402.38" y="38.40" width="5.45" height="5.1" rx="1"/><rect x="409.32" y="38.40" width="5.45" height="5.1" rx="1"/><rect x="416.26" y="38.40" width="5.45" height="5.1" rx="1"/></g></svg>
 <h2 class="t" style="left:114px;top:835px;font-size:107px;color:#fff;font-weight:700;transform:scaleX(0.933);">Backups</h2>
 <button style="left:112px;top:974px;width:1098px;height:163px;background:#1552d8;border-radius:25px;">
  <span class="t" style="left:163px;top:21px;font-size:79px;color:#fff;transform:scaleX(0.953);">Make backup right now</span>
 </button>
 <div class="tbl" role="table" style="left:111px;top:1205px;width:4378px;height:2247px;background:#141414;border-radius:30px 30px 0 0;overflow:hidden;">
  <div role="row" style="left:0px;top:0px;width:4378px;height:157px;background:#2f2f2f;">
   <span class="t th" style="left:56px;top:19px;font-size:82px;color:#f6f6f6;font-weight:700;transform:scaleX(0.900);">Created at</span>
   <span class="t th" style="left:1271px;top:19px;font-size:82px;color:#f6f6f6;font-weight:700;transform:scaleX(0.834);">Status</span>
   <span class="t th" style="left:2206px;top:19px;font-size:82px;color:#f6f6f6;font-weight:700;transform:scaleX(0.878);">Size</span>
   <span class="t th" style="left:3031px;top:19px;font-size:82px;color:#f6f6f6;font-weight:700;transform:scaleX(0.863);">Duration</span>
   <span class="t th" style="left:3856px;top:19px;font-size:82px;color:#f6f6f6;font-weight:700;transform:scaleX(0.828);">Actions</span>
   <svg viewBox="0 0 4.8 7.2" style="left:2054px;top:47px;width:48px;height:72px;"><path d="M2.4 0.1 L4.6 2.9 H0.2 Z" fill="#8c8c8c"/><path d="M0.2 4.2 H4.6 L2.4 7 Z" fill="#1e6fff"/></svg>
   <svg viewBox="0 0 6 5.8" style="left:2861px;top:52px;width:60px;height:58px;"><path d="M0.2 0.2 H5.8 L3.9 3 V5.5 H2.1 V3 Z" fill="#8c8c8c"/></svg>
  </div>
  <div style="left:0px;top:157px;width:1214px;height:2090px;background:#2d2d2d;"></div>
  <div role="row" style="left:0px;top:157px;width:4378px;height:299px;">
   <span class="t" style="left:56px;top:42px;font-size:83px;color:#e0e0e0;transform:scaleX(0.950);">06/10/2025 4:01 PM</span>
   <span class="t" style="left:56px;top:144px;font-size:73px;color:#989898;transform:scaleX(0.985);">(a minute ago)</span>
   <svg viewBox="0 0 10 10" fill="none" stroke="#1e6af5" stroke-width="0.95" stroke-linecap="round" style="left:1266px;top:104px;width:100px;height:100px;"><path d="M1.3 4.2 A3.8 3.8 0 0 1 8 2.6"/><path d="M8.7 5.8 A3.8 3.8 0 0 1 2 7.4"/>
<path d="M8.2 0.9 V2.8 H6.3"/><path d="M1.8 9.1 V7.2 H3.7"/></svg>
   <span class="t" style="left:1406px;top:92px;font-size:81px;color:#1a58d6;transform:scaleX(0.879);">In progress</span>
   <span class="t" style="left:2205px;top:92px;font-size:82px;color:#dedede;transform:scaleX(0.895);">5.27 GB</span>
   <span class="t" style="left:3030px;top:92px;font-size:82px;color:#dedede;transform:scaleX(0.875);">2m 15s</span>
   <svg viewBox="0 0 8.8 10.6" fill="none" stroke="#e60012" stroke-width="0.85" stroke-linejoin="round" style="left:3856px;top:100px;width:88px;height:106px;"><path d="M0.6 2.9 H8.2"/><path d="M3 2.7 V1.5 C3 1 3.3 0.7 3.8 0.7 H5 C5.5 0.7 5.8 1 5.8 1.5 V2.7"/>
<path d="M1.5 3 L1.9 9.2 C1.9 9.7 2.3 10 2.8 10 H6 C6.5 10 6.9 9.7 6.9 9.2 L7.3 3"/>
<path d="M3.5 4.8 V8 M5.3 4.8 V8" stroke-width="0.8"/></svg>
   <svg viewBox="0 0 10.6 8.6" fill="none" stroke="#1e63ea" stroke-width="0.95" stroke-linecap="round" stroke-linejoin="round" style="left:3984px;top:112px;width:106px;height:86px;"><path d="M3 6.6 H2.6 C1.4 6.6 0.6 5.8 0.6 4.8 C0.6 3.9 1.3 3.1 2.2 3 C2.5 1.6 3.7 0.6 5.3 0.6 C6.9 0.6 8.1 1.6 8.4 3 C9.3 3.1 10 3.9 10 4.8 C10 5.8 9.2 6.6 8 6.6 H7.6"/>
<path d="M5.3 8 V4.2 M3.8 5.5 L5.3 4 L6.8 5.5"/></svg>
  </div>
  <div role="row" style="left:0px;top:456px;width:4378px;height:299px;">
   <span class="t" style="left:56px;top:43px;font-size:83px;color:#e0e0e0;transform:scaleX(0.968);">06/09/2025 4:00 PM</span>
   <span class="t" style="left:56px;top:145px;font-size:73px;color:#989898;transform:scaleX(0.985);">(24 hours ago)</span>
   <svg viewBox="0 0 10 10" fill="none" stroke="#0a9a0a" stroke-width="0.85" stroke-linecap="round" stroke-linejoin="round" style="left:1266px;top:103px;width:100px;height:100px;"><circle cx="5" cy="5" r="4.1"/><path d="M3.3 5.1 L4.5 6.3 L6.8 3.8"/></svg>
   <span class="t" style="left:1406px;top:94px;font-size:78px;color:#0a9a0a;transform:scaleX(0.870);">Successful</span>
   <span class="t" style="left:2205px;top:93px;font-size:82px;color:#dedede;transform:scaleX(0.895);">5.25 GB</span>
   <span class="t" style="left:3030px;top:93px;font-size:82px;color:#dedede;transform:scaleX(0.875);">2m 23s</span>
   <svg viewBox="0 0 8.8 10.6" fill="none" stroke="#e60012" stroke-width="0.85" stroke-linejoin="round" style="left:3856px;top:99px;width:88px;height:106px;"><path d="M0.6 2.9 H8.2"/><path d="M3 2.7 V1.5 C3 1 3.3 0.7 3.8 0.7 H5 C5.5 0.7 5.8 1 5.8 1.5 V2.7"/>
<path d="M1.5 3 L1.9 9.2 C1.9 9.7 2.3 10 2.8 10 H6 C6.5 10 6.9 9.7 6.9 9.2 L7.3 3"/>
<path d="M3.5 4.8 V8 M5.3 4.8 V8" stroke-width="0.8"/></svg>
   <svg viewBox="0 0 10.6 8.6" fill="none" stroke="#1e63ea" stroke-width="0.95" stroke-linecap="round" stroke-linejoin="round" style="left:3984px;top:111px;width:106px;height:86px;"><path d="M3 6.6 H2.6 C1.4 6.6 0.6 5.8 0.6 4.8 C0.6 3.9 1.3 3.1 2.2 3 C2.5 1.6 3.7 0.6 5.3 0.6 C6.9 0.6 8.1 1.6 8.4 3 C9.3 3.1 10 3.9 10 4.8 C10 5.8 9.2 6.6 8 6.6 H7.6"/>
<path d="M5.3 8 V4.2 M3.8 5.5 L5.3 4 L6.8 5.5"/></svg>
  </div>
  <div role="row" style="left:0px;top:755px;width:4378px;height:299px;">
   <span class="t" style="left:56px;top:44px;font-size:83px;color:#e0e0e0;transform:scaleX(0.968);">06/08/2025 4:00 PM</span>
   <span class="t" style="left:56px;top:146px;font-size:73px;color:#989898;transform:scaleX(0.985);">(2 days ago)</span>
   <svg viewBox="0 0 10 10" fill="none" stroke="#0a9a0a" stroke-width="0.85" stroke-linecap="round" stroke-linejoin="round" style="left:1266px;top:103px;width:100px;height:100px;"><circle cx="5" cy="5" r="4.1"/><path d="M3.3 5.1 L4.5 6.3 L6.8 3.8"/></svg>
   <span class="t" style="left:1406px;top:95px;font-size:78px;color:#0a9a0a;transform:scaleX(0.870);">Successful</span>
   <span class="t" style="left:2205px;top:94px;font-size:82px;color:#dedede;transform:scaleX(0.895);">5.23 GB</span>
   <span class="t" style="left:3030px;top:94px;font-size:82px;color:#dedede;transform:scaleX(0.875);">2m 9s</span>
   <svg viewBox="0 0 8.8 10.6" fill="none" stroke="#e60012" stroke-width="0.85" stroke-linejoin="round" style="left:3856px;top:99px;width:88px;height:106px;"><path d="M0.6 2.9 H8.2"/><path d="M3 2.7 V1.5 C3 1 3.3 0.7 3.8 0.7 H5 C5.5 0.7 5.8 1 5.8 1.5 V2.7"/>
<path d="M1.5 3 L1.9 9.2 C1.9 9.7 2.3 10 2.8 10 H6 C6.5 10 6.9 9.7 6.9 9.2 L7.3 3"/>
<path d="M3.5 4.8 V8 M5.3 4.8 V8" stroke-width="0.8"/></svg>
   <svg viewBox="0 0 10.6 8.6" fill="none" stroke="#1e63ea" stroke-width="0.95" stroke-linecap="round" stroke-linejoin="round" style="left:3984px;top:111px;width:106px;height:86px;"><path d="M3 6.6 H2.6 C1.4 6.6 0.6 5.8 0.6 4.8 C0.6 3.9 1.3 3.1 2.2 3 C2.5 1.6 3.7 0.6 5.3 0.6 C6.9 0.6 8.1 1.6 8.4 3 C9.3 3.1 10 3.9 10 4.8 C10 5.8 9.2 6.6 8 6.6 H7.6"/>
<path d="M5.3 8 V4.2 M3.8 5.5 L5.3 4 L6.8 5.5"/></svg>
  </div>
  <div role="row" style="left:0px;top:1053px;width:4378px;height:299px;">
   <span class="t" style="left:56px;top:46px;font-size:83px;color:#e0e0e0;transform:scaleX(0.968);">06/07/2025 4:00 PM</span>
   <span class="t" style="left:56px;top:148px;font-size:73px;color:#989898;transform:scaleX(0.985);">(3 days ago)</span>
   <svg viewBox="0 0 10 10" fill="none" stroke="#0a9a0a" stroke-width="0.85" stroke-linecap="round" stroke-linejoin="round" style="left:1266px;top:104px;width:100px;height:100px;"><circle cx="5" cy="5" r="4.1"/><path d="M3.3 5.1 L4.5 6.3 L6.8 3.8"/></svg>
   <span class="t" style="left:1406px;top:97px;font-size:78px;color:#0a9a0a;transform:scaleX(0.870);">Successful</span>
   <span class="t" style="left:2205px;top:96px;font-size:82px;color:#dedede;transform:scaleX(0.895);">5.21 GB</span>
   <span class="t" style="left:3030px;top:96px;font-size:82px;color:#dedede;transform:scaleX(0.875);">2m 5s</span>
   <svg viewBox="0 0 8.8 10.6" fill="none" stroke="#e60012" stroke-width="0.85" stroke-linejoin="round" style="left:3856px;top:100px;width:88px;height:106px;"><path d="M0.6 2.9 H8.2"/><path d="M3 2.7 V1.5 C3 1 3.3 0.7 3.8 0.7 H5 C5.5 0.7 5.8 1 5.8 1.5 V2.7"/>
<path d="M1.5 3 L1.9 9.2 C1.9 9.7 2.3 10 2.8 10 H6 C6.5 10 6.9 9.7 6.9 9.2 L7.3 3"/>
<path d="M3.5 4.8 V8 M5.3 4.8 V8" stroke-width="0.8"/></svg>
   <svg viewBox="0 0 10.6 8.6" fill="none" stroke="#1e63ea" stroke-width="0.95" stroke-linecap="round" stroke-linejoin="round" style="left:3984px;top:112px;width:106px;height:86px;"><path d="M3 6.6 H2.6 C1.4 6.6 0.6 5.8 0.6 4.8 C0.6 3.9 1.3 3.1 2.2 3 C2.5 1.6 3.7 0.6 5.3 0.6 C6.9 0.6 8.1 1.6 8.4 3 C9.3 3.1 10 3.9 10 4.8 C10 5.8 9.2 6.6 8 6.6 H7.6"/>
<path d="M5.3 8 V4.2 M3.8 5.5 L5.3 4 L6.8 5.5"/></svg>
  </div>
  <div role="row" style="left:0px;top:1352px;width:4378px;height:299px;">
   <span class="t" style="left:56px;top:37px;font-size:83px;color:#e0e0e0;transform:scaleX(0.968);">06/06/2025 4:00 PM</span>
   <span class="t" style="left:56px;top:149px;font-size:73px;color:#989898;transform:scaleX(0.985);">(4 days ago)</span>
   <svg viewBox="0 0 10 10" fill="none" stroke="#0a9a0a" stroke-width="0.85" stroke-linecap="round" stroke-linejoin="round" style="left:1266px;top:103px;width:100px;height:100px;"><circle cx="5" cy="5" r="4.1"/><path d="M3.3 5.1 L4.5 6.3 L6.8 3.8"/></svg>
   <span class="t" style="left:1406px;top:98px;font-size:78px;color:#0a9a0a;transform:scaleX(0.870);">Successful</span>
   <span class="t" style="left:2205px;top:97px;font-size:82px;color:#dedede;transform:scaleX(0.895);">5.15 GB</span>
   <span class="t" style="left:3030px;top:97px;font-size:82px;color:#dedede;transform:scaleX(0.875);">1m 53s</span>
   <svg viewBox="0 0 8.8 10.6" fill="none" stroke="#e60012" stroke-width="0.85" stroke-linejoin="round" style="left:3856px;top:99px;width:88px;height:106px;"><path d="M0.6 2.9 H8.2"/><path d="M3 2.7 V1.5 C3 1 3.3 0.7 3.8 0.7 H5 C5.5 0.7 5.8 1 5.8 1.5 V2.7"/>
<path d="M1.5 3 L1.9 9.2 C1.9 9.7 2.3 10 2.8 10 H6 C6.5 10 6.9 9.7 6.9 9.2 L7.3 3"/>
<path d="M3.5 4.8 V8 M5.3 4.8 V8" stroke-width="0.8"/></svg>
   <svg viewBox="0 0 10.6 8.6" fill="none" stroke="#1e63ea" stroke-width="0.95" stroke-linecap="round" stroke-linejoin="round" style="left:3984px;top:111px;width:106px;height:86px;"><path d="M3 6.6 H2.6 C1.4 6.6 0.6 5.8 0.6 4.8 C0.6 3.9 1.3 3.1 2.2 3 C2.5 1.6 3.7 0.6 5.3 0.6 C6.9 0.6 8.1 1.6 8.4 3 C9.3 3.1 10 3.9 10 4.8 C10 5.8 9.2 6.6 8 6.6 H7.6"/>
<path d="M5.3 8 V4.2 M3.8 5.5 L5.3 4 L6.8 5.5"/></svg>
  </div>
  <div role="row" style="left:0px;top:1651px;width:4378px;height:299px;">
   <span class="t" style="left:56px;top:38px;font-size:83px;color:#e0e0e0;transform:scaleX(0.968);">06/05/2025 4:00 PM</span>
   <span class="t" style="left:56px;top:140px;font-size:73px;color:#989898;transform:scaleX(0.985);">(5 days ago)</span>
   <svg viewBox="0 0 10 10" fill="none" stroke="#0a9a0a" stroke-width="0.85" stroke-linecap="round" stroke-linejoin="round" style="left:1266px;top:103px;width:100px;height:100px;"><circle cx="5" cy="5" r="4.1"/><path d="M3.3 5.1 L4.5 6.3 L6.8 3.8"/></svg>
   <span class="t" style="left:1406px;top:89px;font-size:78px;color:#0a9a0a;transform:scaleX(0.870);">Successful</span>
   <span class="t" style="left:2205px;top:88px;font-size:82px;color:#dedede;transform:scaleX(0.895);">5.11 GB</span>
   <span class="t" style="left:3030px;top:88px;font-size:82px;color:#dedede;transform:scaleX(0.875);">1m 57s</span>
   <svg viewBox="0 0 8.8 10.6" fill="none" stroke="#e60012" stroke-width="0.85" stroke-linejoin="round" style="left:3856px;top:99px;width:88px;height:106px;"><path d="M0.6 2.9 H8.2"/><path d="M3 2.7 V1.5 C3 1 3.3 0.7 3.8 0.7 H5 C5.5 0.7 5.8 1 5.8 1.5 V2.7"/>
<path d="M1.5 3 L1.9 9.2 C1.9 9.7 2.3 10 2.8 10 H6 C6.5 10 6.9 9.7 6.9 9.2 L7.3 3"/>
<path d="M3.5 4.8 V8 M5.3 4.8 V8" stroke-width="0.8"/></svg>
   <svg viewBox="0 0 10.6 8.6" fill="none" stroke="#1e63ea" stroke-width="0.95" stroke-linecap="round" stroke-linejoin="round" style="left:3984px;top:111px;width:106px;height:86px;"><path d="M3 6.6 H2.6 C1.4 6.6 0.6 5.8 0.6 4.8 C0.6 3.9 1.3 3.1 2.2 3 C2.5 1.6 3.7 0.6 5.3 0.6 C6.9 0.6 8.1 1.6 8.4 3 C9.3 3.1 10 3.9 10 4.8 C10 5.8 9.2 6.6 8 6.6 H7.6"/>
<path d="M5.3 8 V4.2 M3.8 5.5 L5.3 4 L6.8 5.5"/></svg>
  </div>
  <div role="row" style="left:0px;top:1949px;width:4378px;height:299px;">
   <span class="t" style="left:56px;top:40px;font-size:83px;color:#e0e0e0;transform:scaleX(0.968);">06/04/2025 4:00 PM</span>
   <span class="t" style="left:56px;top:142px;font-size:73px;color:#989898;transform:scaleX(0.985);">(6 days ago)</span>
   <svg viewBox="0 0 10 10" fill="none" stroke="#0a9a0a" stroke-width="0.85" stroke-linecap="round" stroke-linejoin="round" style="left:1266px;top:104px;width:100px;height:100px;"><circle cx="5" cy="5" r="4.1"/><path d="M3.3 5.1 L4.5 6.3 L6.8 3.8"/></svg>
   <span class="t" style="left:1406px;top:91px;font-size:78px;color:#0a9a0a;transform:scaleX(0.870);">Successful</span>
   <span class="t" style="left:2205px;top:90px;font-size:82px;color:#dedede;transform:scaleX(0.895);">5.08 GB</span>
   <span class="t" style="left:3030px;top:90px;font-size:82px;color:#dedede;transform:scaleX(0.875);">1m 51s</span>
   <svg viewBox="0 0 8.8 10.6" fill="none" stroke="#e60012" stroke-width="0.85" stroke-linejoin="round" style="left:3856px;top:100px;width:88px;height:106px;"><path d="M0.6 2.9 H8.2"/><path d="M3 2.7 V1.5 C3 1 3.3 0.7 3.8 0.7 H5 C5.5 0.7 5.8 1 5.8 1.5 V2.7"/>
<path d="M1.5 3 L1.9 9.2 C1.9 9.7 2.3 10 2.8 10 H6 C6.5 10 6.9 9.7 6.9 9.2 L7.3 3"/>
<path d="M3.5 4.8 V8 M5.3 4.8 V8" stroke-width="0.8"/></svg>
   <svg viewBox="0 0 10.6 8.6" fill="none" stroke="#1e63ea" stroke-width="0.95" stroke-linecap="round" stroke-linejoin="round" style="left:3984px;top:112px;width:106px;height:86px;"><path d="M3 6.6 H2.6 C1.4 6.6 0.6 5.8 0.6 4.8 C0.6 3.9 1.3 3.1 2.2 3 C2.5 1.6 3.7 0.6 5.3 0.6 C6.9 0.6 8.1 1.6 8.4 3 C9.3 3.1 10 3.9 10 4.8 C10 5.8 9.2 6.6 8 6.6 H7.6"/>
<path d="M5.3 8 V4.2 M3.8 5.5 L5.3 4 L6.8 5.5"/></svg>
  </div>
  <svg viewBox="0 0 437.8 224.7" fill="none" stroke-width="1" style="left:0px;top:0px;width:4378px;height:2247px;"><path stroke="#fff" stroke-opacity="0.1" d="M215.30 0 V224.7 M297.50 0 V224.7 M380.40 0 V224.7 "/><path stroke="#3e3e3e" d="M121.40 0 V224.7"/><path stroke="#fff" stroke-opacity="0.11" d="M0.5 224.7 V3 Q0.5 0.5 3 0.5 H434.80 Q437.30 0.5 437.30 3 V224.7"/><path stroke="#fff" stroke-opacity="0.065" d="M0 15.20 H437.8"/><path stroke="#fff" stroke-opacity="0.1" d="M0 45.07 H437.8 M0 74.95 H437.8 M0 104.82 H437.8 M0 134.70 H437.8 M0 164.57 H437.8 M0 194.45 H437.8 M0 224.20 H437.8"/></svg>
 </div>
</main>
</div></body></html>
